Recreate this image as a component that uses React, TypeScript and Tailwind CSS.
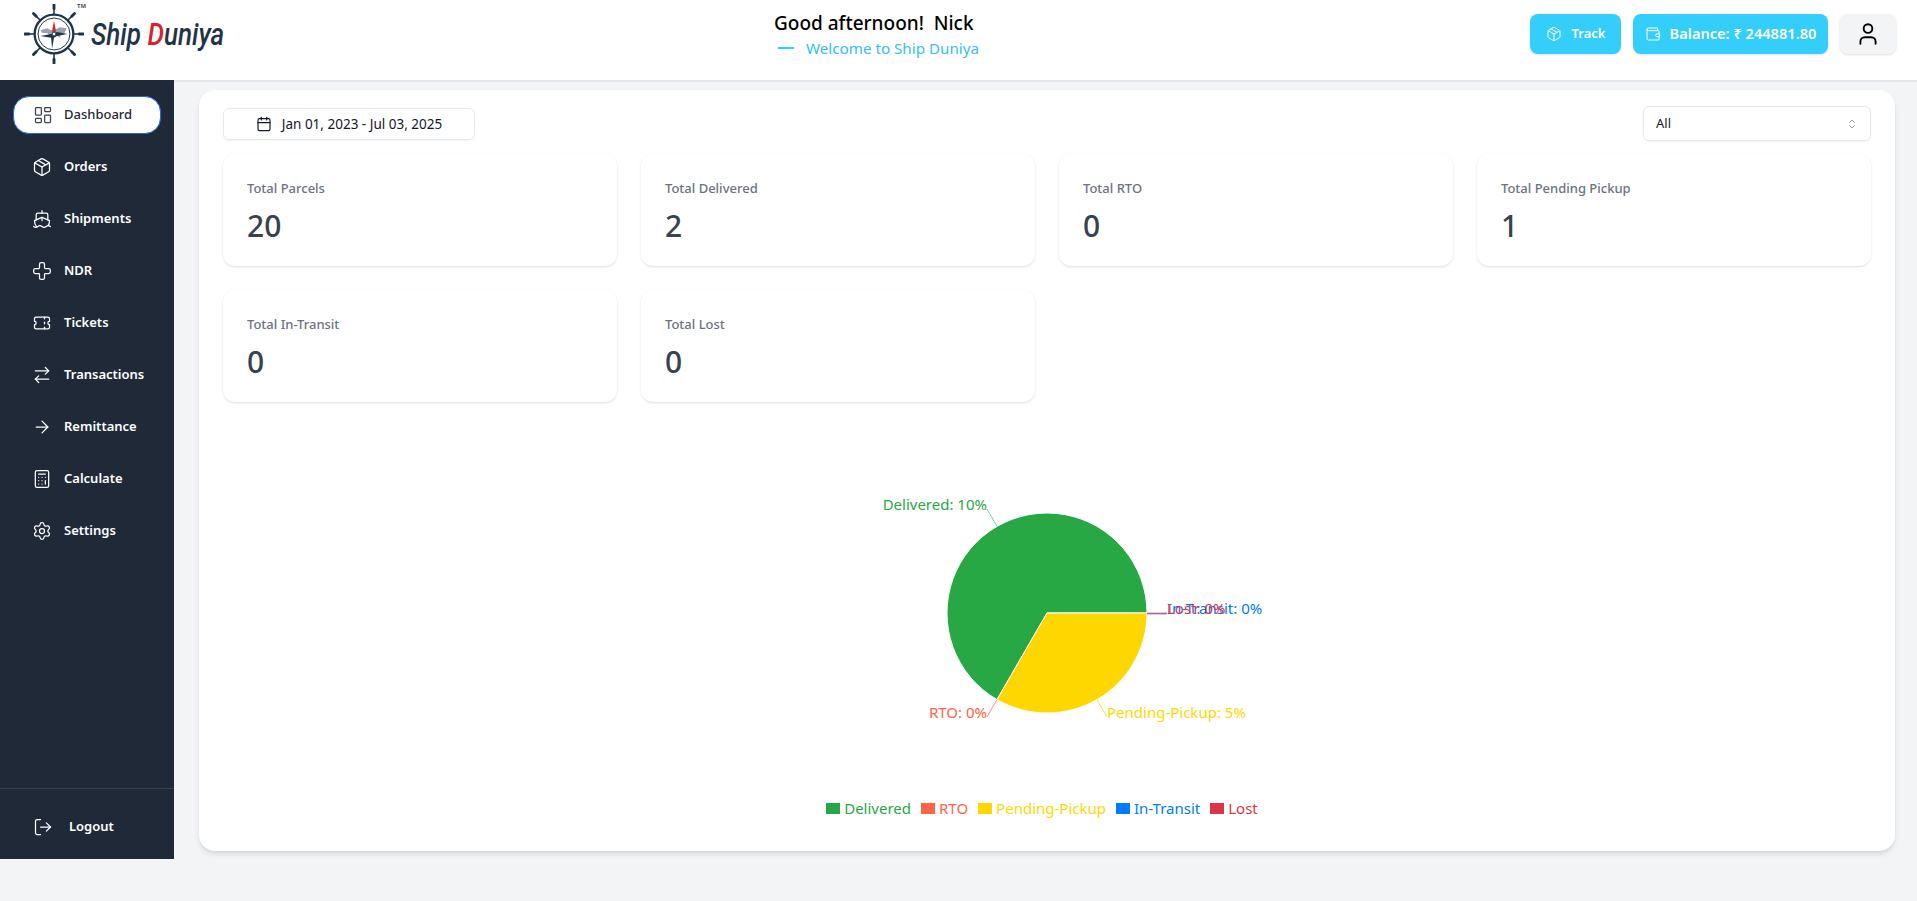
import {
  ArrowRight,
  ArrowRightLeft,
  Calculator,
  Calendar,
  ChevronsUpDown,
  Cross,
  LayoutDashboard,
  LogOut,
  Package,
  Settings,
  Ship,
  User,
  Wallet,
} from "lucide-react"
import { TbTicket } from "react-icons/tb"

const navItems = [
  { label: "Orders", icon: Package },
  { label: "Shipments", icon: Ship },
  { label: "NDR", icon: Cross },
  { label: "Tickets", icon: TbTicket },
  { label: "Transactions", icon: ArrowRightLeft },
  { label: "Remittance", icon: ArrowRight },
  { label: "Calculate", icon: Calculator },
  { label: "Settings", icon: Settings },
]

const stats = [
  { label: "Total Parcels", value: "20" },
  { label: "Total Delivered", value: "2" },
  { label: "Total RTO", value: "0" },
  { label: "Total Pending Pickup", value: "1" },
  { label: "Total In-Transit", value: "0" },
  { label: "Total Lost", value: "0" },
]

const legend = [
  { label: "Delivered", swatch: "bg-[#28a745]", text: "text-[#28a745]" },
  { label: "RTO", swatch: "bg-[#ff6347]", text: "text-[#ff6347]" },
  { label: "Pending-Pickup", swatch: "bg-[#ffd700]", text: "text-[#ffd700]" },
  { label: "In-Transit", swatch: "bg-[#007bff]", text: "text-[#007bff]" },
  { label: "Lost", swatch: "bg-[#dc3545]", text: "text-[#dc3545]" },
]

function LogoMark() {
  const spokes = [0, 45, 90, 135, 180, 225, 270, 315]
  return (
    <svg width="60" height="60" viewBox="0 0 62 62" className="shrink-0">
      {spokes.map((a) => (
        <g key={a} transform={`rotate(${a} 31 31)`}>
          <line x1="31" y1="12" x2="31" y2="3" stroke="#1f3448" strokeWidth="1.6" />
          <line x1="31" y1="5" x2="31" y2="1" stroke="#1f3448" strokeWidth="3" strokeLinecap="round" />
        </g>
      ))}
      <circle cx="31" cy="31" r="20" fill="#fff" stroke="#1f3448" strokeWidth="2.4" />
      <circle cx="31" cy="31" r="16.5" fill="none" stroke="#1f3448" strokeWidth="1" />
      <path d="M17 27l7-2 4 2 5-1 4-2 7 1-2 5-4 1-1 4-4-3-6 1-3-3-5 0z" fill="#9aa3ab" />
      <path d="M31 31l-2-3 2-11 2 11z" fill="#d8232a" />
      <path d="M31 31l3-2 11 2-11 2 -3 2-2 11-1-11-11-2 11-2z" fill="#1f3448" />
      <circle cx="31" cy="31" r="2" fill="#fff" stroke="#1f3448" />
    </svg>
  )
}

function Logo() {
  return (
    <div className="relative flex w-[222px] items-center pl-[24px]">
      <LogoMark />
      <span className="absolute left-[77px] top-[-1px] text-[6px] font-bold leading-none text-[#4b5563]">TM</span>
      <span className="ml-[7px] origin-left scale-x-[0.84] whitespace-nowrap font-['Roboto',sans-serif] text-[31px] font-medium italic leading-none text-[#1f3448]">
        Ship <span className="text-[#d8232a]">D</span>uniya
      </span>
    </div>
  )
}

function PieChart() {
  const cx = 824
  const cy = 187
  return (
    <svg width="1648" height="368" className="block">
      <path d={`M${cx},${cy} L${cx + 100},${cy} A100,100 0 1 0 ${cx - 50},${cy + 86.6} Z`} fill="#28a745" stroke="#fff" />
      <path d={`M${cx},${cy} L${cx - 50},${cy + 86.6} A100,100 0 0 0 ${cx + 100},${cy} Z`} fill="#ffd700" stroke="#fff" />
      <g fill="none">
        <path d={`M${cx - 50},${cy - 86.6} L${cx - 60},${cy - 104}`} stroke="#28a745" strokeOpacity="0.6" />
        <path d={`M${cx - 50},${cy + 86.6} L${cx - 60},${cy + 104}`} stroke="#ff6347" strokeOpacity="0.7" />
        <path d={`M${cx + 50},${cy + 86.6} L${cx + 60},${cy + 104}`} stroke="#ffd700" strokeOpacity="0.8" />
        <path d={`M${cx + 100},${cy + 0.5} L${cx + 120},${cy + 0.5}`} stroke="#007bff" strokeOpacity="0.6" strokeWidth="1.5" />
        <path d={`M${cx + 100},${cy + 0.5} L${cx + 120},${cy + 0.5}`} stroke="#dc3545" strokeOpacity="0.6" strokeWidth="1.5" />
      </g>
      <g className="font-['Noto_Sans',sans-serif] text-[15px]" dominantBaseline="central">
        <text x={cx - 60} y={cy - 109} textAnchor="end" fill="#28a745">Delivered: 10%</text>
        <text x={cx - 60} y={cy + 99} textAnchor="end" fill="#ff6347">RTO: 0%</text>
        <text x={cx + 60} y={cy + 99} fill="#ffd700">Pending-Pickup: 5%</text>
        <text x={cx + 120} y={cy - 5} fill="#007bff">In-Transit: 0%</text>
        <text x={cx + 120} y={cy - 5} fill="#dc3545">Lost: 0%</text>
      </g>
    </svg>
  )
}

export default function App() {
  return (
    <div className="flex h-screen flex-col overflow-hidden bg-[#f3f4f6] font-['Noto_Sans',sans-serif]">
      <header className="flex h-[80px] shrink-0 items-center justify-between bg-white pb-[12px] pr-[21px]">
        <Logo />
        <div className="flex w-[206px] flex-col">
          <div className="whitespace-nowrap pl-[1px] text-[19px] font-medium leading-[28px] text-black">Good afternoon!&nbsp; Nick</div>
          <div className="flex items-center whitespace-nowrap pl-[5px] text-[15.2px] leading-[22px] text-[#38bdf8]">
            <span className="mr-[12px] h-[2px] w-[16px] bg-[#33cefa]" />
            Welcome to Ship Duniya
          </div>
        </div>
        <div className="flex items-center gap-3">
          <button className="flex h-10 w-[91px] items-center justify-center gap-[10px] rounded-lg bg-[#33cefa] text-[13px] font-semibold text-white shadow-sm">
            <Package size={16} strokeWidth={1.5} />
            Track
          </button>
          <button className="flex h-10 w-[195px] items-center justify-center gap-[9px] rounded-lg bg-[#33cefa] text-[14.6px] font-semibold text-white shadow-sm">
            <Wallet size={16} strokeWidth={1.5} />
            Balance: ₹ 244881.80
          </button>
          <button className="flex h-10 w-14 items-center justify-center rounded-lg bg-[#f3f4f6] text-black shadow-sm">
            <User size={26} strokeWidth={1.75} />
          </button>
        </div>
      </header>

      <div className="flex min-h-0 items-start">
        <aside className="flex h-[779px] w-[174px] shrink-0 flex-col bg-[#1f2937]">
          <nav className="flex flex-1 flex-col gap-[14px] px-[13px] pt-[16px]">
            <a className="flex h-[38px] items-center gap-[11px] rounded-2xl border border-[#2563eb] bg-white pl-[19px] text-[13px] font-medium text-[#1f2937]">
              <LayoutDashboard size={20} strokeWidth={1.5} className="text-[#374151]" />
              Dashboard
            </a>
            {navItems.map((item) => {
              const Icon = item.icon
              return (
                <a key={item.label} className="flex h-[38px] items-center gap-[12px] rounded-2xl pl-[19px] text-[13px] font-semibold text-white shadow-[0_1px_1px_rgba(0,0,0,0.03)]">
                  <Icon size={20} strokeWidth={1.5} />
                  {item.label}
                </a>
              )
            })}
          </nav>
          <div className="flex h-[71px] items-center gap-[16px] border-t border-[#374151] pl-[33px] pt-[5px] text-[13px] font-semibold text-white">
            <LogOut size={20} strokeWidth={1.5} className="scale-x-[-1] rotate-180" />
            Logout
          </div>
        </aside>

        <div className="flex-1 border-t-2 border-[#e5e7eb] pl-[25px] pt-[8px]">
          <main className="h-[761px] w-[1696px] rounded-2xl bg-white px-6 pt-4 shadow-md">
            <div className="flex items-start justify-between">
              <button className="mt-[2px] flex h-[32px] w-[252px] items-center justify-center gap-[10px] rounded-md border border-[#e2e8f0] text-[13.5px] text-[#111827] shadow-xs">
                <Calendar size={16} strokeWidth={1.75} />
                Jan 01, 2023 - Jul 03, 2025
              </button>
              <div className="flex h-[35px] w-[228px] items-center justify-between rounded-md border border-[#e2e8f0] px-[12px] text-[13px] text-[#111827] shadow-xs">
                All
                <ChevronsUpDown size={12} className="text-[#9ca3af]" />
              </div>
            </div>

            <div className="mt-[13px] grid grid-cols-4 gap-x-6 gap-y-[24px]">
              {stats.map((s) => (
                <div key={s.label} className="h-[112px] rounded-xl bg-white px-6 pt-[24px] shadow-sm">
                  <div className="text-[13px] font-medium leading-[20px] text-[#6b7280]">{s.label}</div>
                  <div className="mt-[10px] text-[30px] font-medium leading-[36px] text-[#374151]">{s.value}</div>
                </div>
              ))}
            </div>

            <div className="mt-[24px]">
              <PieChart />
              <div className="flex h-[24px] items-center justify-center gap-[10px] pr-[10px] pt-[4px]">
                {legend.map((l) => (
                  <div key={l.label} className={`flex items-center gap-[4px] text-[15px] ${l.text}`}>
                    <span className={`h-[11px] w-[14px] ${l.swatch}`} />
                    {l.label}
                  </div>
                ))}
              </div>
            </div>
          </main>
        </div>
      </div>
    </div>
  )
}
